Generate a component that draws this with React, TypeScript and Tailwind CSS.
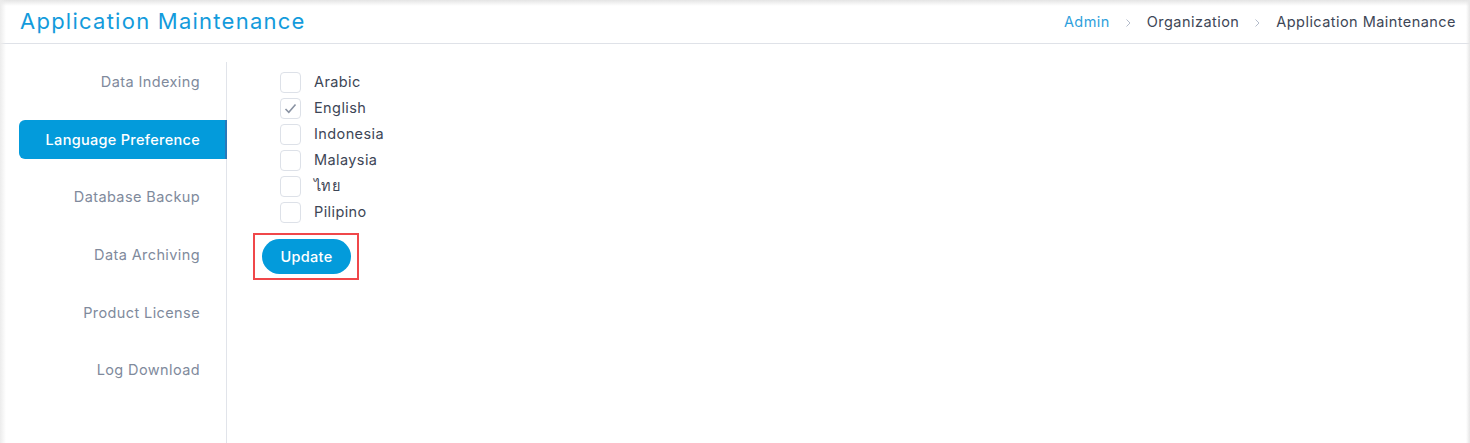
import React, { useState } from 'react';

const NAV_ITEMS = [
    'Data Indexing',
    'Language Preference',
    'Database Backup',
    'Data Archiving',
    'Product License',
    'Log Download',
];

const LANGUAGES = ['Arabic', 'English', 'Indonesia', 'Malaysia', 'ไทย', 'Pilipino'];

const Chevron = () => (
    <svg width="7" height="10" viewBox="0 0 7 10" className="mx-[15px] mt-[3px]">
        <path d="M1.5 1.5 L5 5 L1.5 8.5" fill="none" stroke="#b4bccb" strokeWidth="1" />
    </svg>
);

export default function App() {
    const [active, setActive] = useState('Language Preference');
    const [checked, setChecked] = useState<string[]>(['English']);

    const toggle = (lang: string) => {
        setChecked((prev) => (prev.includes(lang) ? prev.filter((l) => l !== lang) : [...prev, lang]));
    };

    return (
        <div
            className="relative w-[1470px] h-[443px] overflow-hidden bg-white text-[#3d4656]"
            style={{ fontFamily: 'Inter, "Noto Sans", sans-serif' }}
        >
            {/* edge shadows */}
            <div className="pointer-events-none absolute inset-x-0 top-0 h-[6px] bg-gradient-to-b from-[#e4e4e4] to-transparent" />
            <div className="pointer-events-none absolute inset-y-0 left-0 w-[6px] bg-gradient-to-r from-[#ececec] to-transparent" />
            <div className="pointer-events-none absolute inset-y-0 right-0 w-[4px] bg-gradient-to-l from-[#e6e6e6] to-transparent" />

            {/* Header */}
            <div className="flex h-[44px] items-center justify-between border-b border-[#dfe2e8] pl-[20px] pr-[14px]">
                <h1 className="text-[22px] font-normal tracking-[1.25px] text-[#139bdc]">Application Maintenance</h1>
                <div className="flex items-center text-[14.5px] tracking-[0.45px]">
                    <span className="text-[#2f9fdc]">Admin</span>
                    <Chevron />
                    <span className="text-[#3d4656]">Organization</span>
                    <Chevron />
                    <span className="text-[#3d4656]">Application Maintenance</span>
                </div>
            </div>

            {/* Body */}
            <div className="flex">
                <nav className="mt-[18px] flex h-[381px] w-[227px] flex-col gap-[18.6px] border-r border-[#e1e4ea] pl-[19px] pt-[0.5px]">
                    {NAV_ITEMS.map((item) => {
                        const isActive = item === active;
                        return (
                            <button
                                key={item}
                                onClick={() => setActive(item)}
                                className={
                                    isActive
                                        ? 'mr-[-1px] flex h-[39px] shrink-0 items-center justify-end rounded-l-[6px] border-r-2 border-[#2a78b8] bg-[#039bdb] pr-[25px] text-[14.5px] font-medium tracking-[0.3px] text-white'
                                        : 'flex h-[39px] shrink-0 items-center justify-end pr-[26px] text-[14.5px] tracking-[0.4px] text-[#808a9c]'
                                }
                            >
                                {item}
                            </button>
                        );
                    })}
                </nav>

                <div className="flex flex-col pl-[53px] pt-[25px]">
                    <div className="flex flex-col">
                        {LANGUAGES.map((lang) => {
                            const isChecked = checked.includes(lang);
                            return (
                                <label key={lang} className="flex h-[26px] cursor-pointer items-center" onClick={() => toggle(lang)}>
                                    <span className="flex h-[21px] w-[21px] items-center justify-center rounded-[4px] border border-[#dde1e8] bg-white">
                                        {isChecked && (
                                            <svg width="13" height="11" viewBox="0 0 13 11">
                                                <path d="M1.5 6 L4.8 9.3 L11.5 1.5" fill="none" stroke="#8a93a3" strokeWidth="1.6" />
                                            </svg>
                                        )}
                                    </span>
                                    <span className="ml-[13px] text-[14.5px] tracking-[0.4px] text-[#3d4656]">{lang}</span>
                                </label>
                            );
                        })}
                    </div>
                    <div className="ml-[-27px] mt-[8px] w-[106px] border-2 border-[#f0474a] px-[7px] py-[4px]">
                        <button className="h-[35px] w-[89px] rounded-full bg-[#039bdb] text-[14.5px] font-medium tracking-[0.3px] text-white">
                            Update
                        </button>
                    </div>
                </div>
            </div>
        </div>
    );
}
